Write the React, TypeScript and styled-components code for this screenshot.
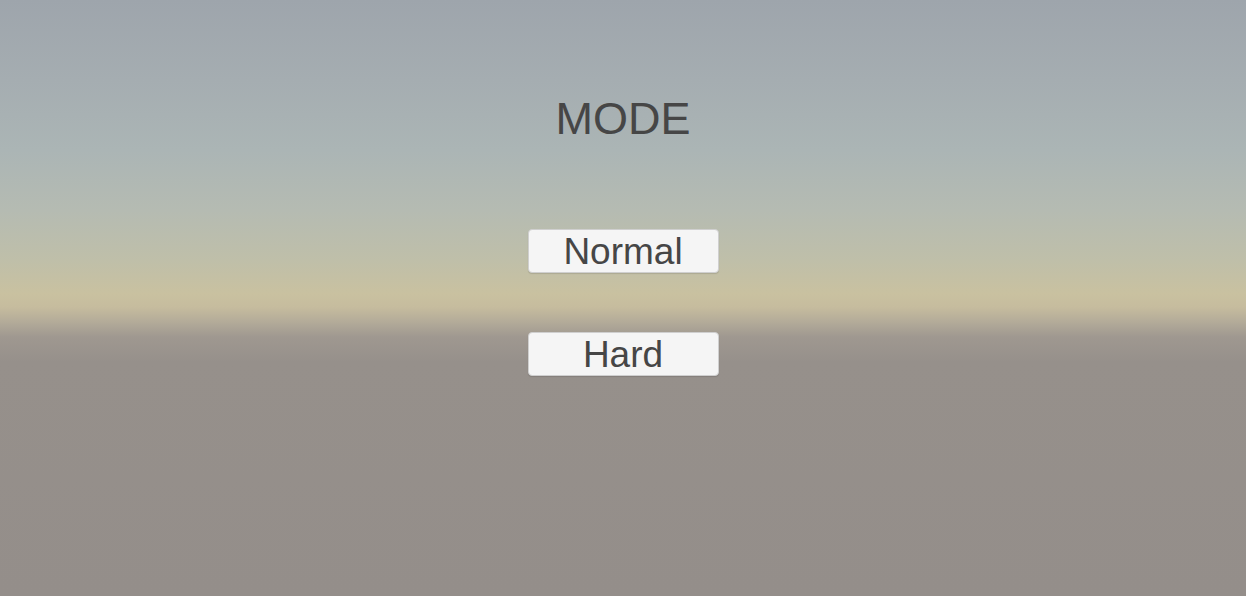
import React from "react";
import styled, { createGlobalStyle } from "styled-components";

const GlobalStyle = createGlobalStyle`
  html, body {
    margin: 0;
    padding: 0;
  }
  body {
    font-family: "Liberation Sans", Arial, sans-serif;
  }
`;

export default function App() {
  const modes = ["Normal", "Hard"];

  return (
    <>
      <GlobalStyle />
      <SScene>
        <STitle>MODE</STitle>
        <SButtonList>
          {modes.map((m) => (
            <SModeButton key={m} type="button">
              {m}
            </SModeButton>
          ))}
        </SButtonList>
      </SScene>
    </>
  );
}

const SScene = styled.div`
  width: 100%;
  height: 100vh;
  min-height: 596px;
  box-sizing: border-box;
  padding-top: 96px;
  display: flex;
  flex-direction: column;
  align-items: center;
  overflow: hidden;
  background: linear-gradient(
    to bottom,
    #9ea5ac 0px,
    #a5adb1 80px,
    #abb5b5 150px,
    #b5bbb2 210px,
    #bfbfa9 260px,
    #c9c1a0 294px,
    #c6bc9e 307px,
    #b3ab99 322px,
    #9f9890 337px,
    #96908b 362px,
    #948e8a 596px
  );
`;

const STitle = styled.h1`
  margin: 0;
  font-family: "Liberation Sans", Arial, sans-serif;
  font-weight: normal;
  font-size: 45px;
  line-height: 45px;
  color: #464646;
`;

const SButtonList = styled.div`
  margin-top: 88px;
  display: flex;
  flex-direction: column;
  gap: 59px;
`;

const SModeButton = styled.button`
  width: 191px;
  height: 44px;
  box-sizing: border-box;
  padding: 0;
  display: flex;
  align-items: center;
  justify-content: center;
  background-color: #f5f5f5;
  border: 1px solid #cfcfcf;
  border-radius: 4px;
  box-shadow: 0 1px 1px rgba(0, 0, 0, 0.12);
  font-family: "Liberation Sans", Arial, sans-serif;
  font-size: 37px;
  line-height: 1;
  color: #464646;
  cursor: pointer;
`;
